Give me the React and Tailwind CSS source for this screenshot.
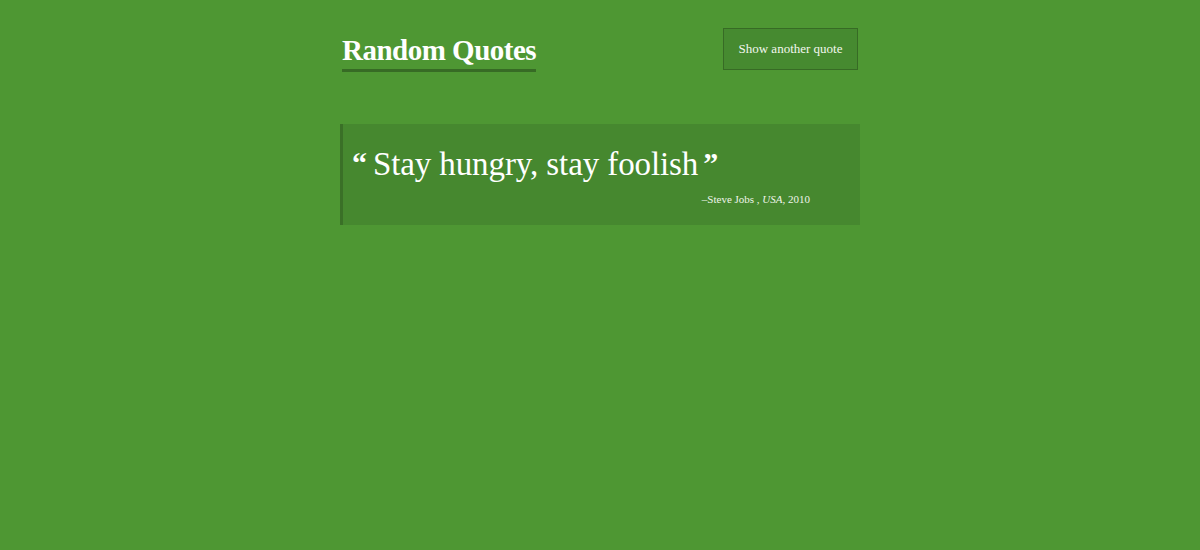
export default function App() {
  const serif = { fontFamily: '"Liberation Serif", "DejaVu Serif", serif' };
  return (
    <div className="min-h-[550px] w-full bg-[#4e9733] text-white" style={serif}>
      <div className="mx-auto w-[520px] pt-[28px]">
        <header className="flex items-start justify-between">
          <h1 className="ml-[2px] mt-[4px] border-b-[3px] border-[#376b25] text-[29px] font-bold leading-[37px] tracking-[-0.5px]">
            Random Quotes
          </h1>
          <button className="mr-[2px] h-[42px] w-[135px] border border-[#376b25] bg-[#468a30] text-[13px] text-[#f3f7ee]">
            Show another quote
          </button>
        </header>

        <blockquote className="mt-[52px] h-[101px] border-l-[3px] border-[#3a7027] bg-[#46882f] pl-[9px] pr-[50px] pt-[20px]">
          <p className="flex items-baseline text-[33px] leading-[40px] tracking-[-0.1px]">
            <span className="mr-[6px] relative top-[-2px] text-[30px] font-bold">“</span>
            <span>Stay hungry, stay foolish</span>
            <span className="ml-[5px] relative top-[-2px] text-[30px] font-bold">”</span>
          </p>
          <p className="mt-[6px] text-right text-[11px] leading-[16px] text-[#eef4ea]">
            –Steve Jobs , <em>USA</em>, 2010
          </p>
        </blockquote>
      </div>
    </div>
  );
}
